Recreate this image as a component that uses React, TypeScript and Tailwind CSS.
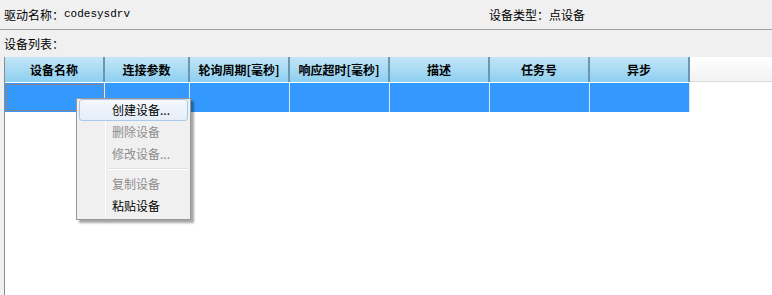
const cols = [
	{ label: "设备名称", w: "w-[100px]" },
	{ label: "连接参数", w: "w-[85px]" },
	{ label: "轮询周期[毫秒]", w: "w-[100px]" },
	{ label: "响应超时[毫秒]", w: "w-[100px]" },
	{ label: "描述", w: "w-[100px]" },
	{ label: "任务号", w: "w-[100px]" },
	{ label: "异步", w: "w-[100px]" },
];

const menu = [
	{ label: "创建设备...", enabled: true, active: true },
	{ label: "删除设备", enabled: false },
	{ label: "修改设备...", enabled: false },
	{ sep: true },
	{ label: "复制设备", enabled: false },
	{ label: "粘贴设备", enabled: true },
];

const App = () => {
	return (
		<div className="w-[772px] h-[295px] overflow-hidden bg-[#f0f0f0] text-[12px] text-black font-['Noto_Sans_CJK_SC',sans-serif] relative">
			{/* top info */}
			<div className="h-[30px] flex items-center border-b border-[#a0a0a0]">
				<div className="w-[489px] pl-[4px] flex items-center">
					<span>驱动名称：</span>
					<span className="font-['Liberation_Mono',monospace] text-[11px]">codesysdrv</span>
				</div>
				<div>设备类型：点设备</div>
			</div>
			<div className="h-[27px] pl-[4px] flex items-center pt-[1px]">设备列表：</div>

			{/* table */}
			<div className="ml-[4px] h-[238px] bg-white border-l border-[#8c8c8c]">
				<div className="flex h-[25px]">
					{cols.map((c) => (
						<div
							key={c.label}
							className={`${c.w} shrink-0 flex items-center justify-center font-bold border-r-2 border-[#6a98b2] bg-gradient-to-b from-[#c4e6f7] to-[#8ccff0]`}>
							{c.label}
						</div>
					))}
					<div className="flex-1 bg-gradient-to-b from-white to-[#f2f2f2] border-b border-[#dcdcdc]" />
				</div>
				<div className="h-px bg-white" />
				<div className="flex h-[29px]">
					{cols.map((c, i) => (
						<div
							key={c.label}
							className={`${c.w} shrink-0 bg-[#3399ff] border-r border-[#d6e9ff] p-[1px]`}>
							{i === 0 && <div className="h-full border border-dotted border-[#e07020]" />}
						</div>
					))}
				</div>
			</div>

			{/* context menu */}
			<div className="absolute left-[76px] top-[98px] w-[115px] bg-[#f0f0f0] border border-[#979797] shadow-[3px_3px_2px_rgba(0,0,0,0.35)] pt-[0px] pb-[2px] px-[2px]">
				<div className="absolute left-[28px] top-[2px] bottom-[2px] w-px bg-[#e2e3e3] border-r border-white" />
				{menu.map((m, i) =>
					m.sep ? (
						<div key={i} className="ml-[30px] my-[3px] h-[2px] border-t border-[#e0e0e0] border-b border-b-white" />
					) : (
						<div
							key={i}
							className={`relative h-[22px] flex items-center pl-[32px] rounded-[3px] ${m.active ? "bg-gradient-to-b from-[#f4f8fc] to-[#e6eef8] border border-[#a8c8ec]" : "border border-transparent"} ${m.enabled ? "text-black" : "text-[#8d8d8d]"}`}>
							{m.label}
						</div>
					),
				)}
			</div>
		</div>
	);
};

export default App;
